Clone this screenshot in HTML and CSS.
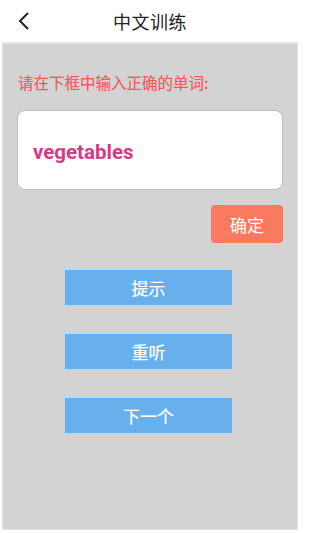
FILE: index.html
```html
<!DOCTYPE html>
<html lang="zh">
<head>
<meta charset="utf-8">
<link rel="stylesheet" href="styles.css">
</head>
<body>
<div class="app">
  <header class="topbar">
    <svg class="back" width="14" height="20" viewBox="0 0 14 20"><path d="M11 2 L3 10 L11 18" fill="none" stroke="#222" stroke-width="2"/></svg>
    <div class="title">中文训练</div>
  </header>
  <main class="content">
    <p class="prompt">请在下框中输入正确的单词:</p>
    <div class="inputbox"><span class="word">vegetables</span></div>
    <div class="confirm-row"><button class="confirm">确定</button></div>
    <div class="actions">
      <button class="action">提示</button>
      <button class="action">重听</button>
      <button class="action">下一个</button>
    </div>
  </main>
</div>
</body>
</html>
```
FILE: styles.css
```css
html, body {
  margin: 0;
  padding: 0;
  background: #fff;
  font-family: "Noto Sans CJK SC", "Noto Sans", sans-serif;
}
.app {
  width: 300px;
  height: 533px;
  display: flex;
  flex-direction: column;
}
.topbar {
  height: 42px;
  position: relative;
  display: flex;
  align-items: center;
  justify-content: center;
  border-bottom: 1px solid #ececec;
}
.back {
  position: absolute;
  left: 17px;
  top: 11px;
}
.title {
  font-size: 18px;
  color: #222;
  letter-spacing: 0.5px;
}
.content {
  flex: 1;
  background: #d3d3d3;
  margin: 0 2px 3px 2px;
  border: 1px solid #e2e2e2;
  padding: 0 14px;
  display: flex;
  flex-direction: column;
}
.prompt {
  margin: 27px 0 0 1px;
  color: #ef5b5b;
  font-size: 15.5px;
  line-height: 22px;
  -webkit-text-stroke: 0.2px #ef5b5b;
}
.inputbox {
  margin-top: 17px;
  height: 78px;
  background: #fff;
  border: 1px solid #bdbdbd;
  border-radius: 8px;
  display: flex;
  align-items: center;
  padding-left: 15px;
}
.word {
  font-family: Roboto, "Noto Sans", sans-serif;
  font-weight: bold;
  font-size: 20.5px;
  color: #d63a84;
  margin-top: 3px;
}
.confirm-row {
  display: flex;
  justify-content: flex-end;
  margin-top: 15px;
}
.confirm {
  width: 72px;
  height: 38px;
  border: none;
  border-radius: 4px;
  background: #f97a5e;
  color: #fff;
  font-family: "Noto Sans CJK SC", sans-serif;
  font-size: 17px;
  padding: 0;
}
.actions {
  display: flex;
  flex-direction: column;
  align-items: center;
  gap: 29px;
  margin-top: 27px;
  margin-right: 3px;
}
.action {
  width: 167px;
  height: 35px;
  border: none;
  background: #68b0ec;
  color: #fff;
  font-family: "Noto Sans CJK SC", sans-serif;
  font-size: 17px;
  padding: 0;
  -webkit-text-stroke: 0.2px #fff;
}
```
